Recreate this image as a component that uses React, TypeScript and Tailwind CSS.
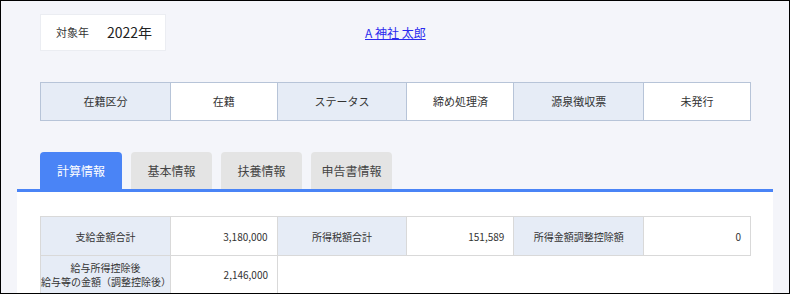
import React from "react"

const statusCells = [
  { label: "在籍区分", value: "在籍" },
  { label: "ステータス", value: "締め処理済" },
  { label: "源泉徴収票", value: "未発行" },
]

const tabs = ["計算情報", "基本情報", "扶養情報", "申告書情報"]

export default function App() {
  return (
    <div
      className="w-[790px] h-[294px] border border-black bg-[#f4f5fa] overflow-hidden text-[#333]"
      style={{ fontFamily: '"Noto Sans CJK JP", "Noto Sans", sans-serif' }}
    >
      {/* 上部 */}
      <div className="flex items-center mt-[13px] ml-[39px]">
        <div className="w-[126px] h-[37px] bg-white border border-[#ebedf2] flex items-center pl-[15px]">
          <span className="text-[11px]">対象年</span>
          <span className="text-[14px] ml-[18px] text-[#222]">2022年</span>
        </div>
        <a href="#" className="ml-[199px] text-[12px] text-[#2a2aee] underline">
          A 神社 太郎
        </a>
      </div>

      {/* ステータス */}
      <div className="mt-[31px] ml-[39px] flex border-t border-l border-[#b7c4d8] w-[711px]">
        {statusCells.map(c => (
          <React.Fragment key={c.label}>
            <div className="w-[130px] h-[38px] flex items-center justify-center bg-[#e6ecf6] border-r border-b border-[#b7c4d8] text-[11px]">
              {c.label}
            </div>
            <div className="w-[107px] h-[38px] flex items-center justify-center bg-white border-r border-b border-[#b7c4d8] text-[11px]">
              {c.value}
            </div>
          </React.Fragment>
        ))}
      </div>

      {/* タブ */}
      <div className="mt-[31px] ml-[39px] flex gap-[9px]">
        {tabs.map((t, i) => (
          <div
            key={t}
            className={
              i === 0
                ? "w-[82px] h-[37px] rounded-t-[4px] bg-[#4a84f6] text-white text-[12px] flex items-center justify-center"
                : "w-[81px] h-[37px] rounded-t-[4px] bg-[#e4e4e4] text-[#444] text-[12px] flex items-center justify-center"
            }
          >
            {t}
          </div>
        ))}
      </div>
      <div className="ml-[16px] w-[756px] h-[3px] bg-[#4a84f6]" />

      {/* 計算情報 */}
      <div className="ml-[16px] w-[756px] h-[200px] bg-white pt-[24px] pl-[23px]">
        <div className="w-[711px] border-t border-l border-[#d9d9d9] text-[10px]">
          <div className="flex">
            <div className="w-[130px] h-[39px] flex items-center justify-center bg-[#e6ecf6] border-r border-b border-[#d9d9d9]">支給金額合計</div>
            <div className="w-[107px] h-[39px] flex items-center justify-end pr-[9px] border-r border-b border-[#d9d9d9]">3,180,000</div>
            <div className="w-[130px] h-[39px] flex items-center justify-center bg-[#e6ecf6] border-r border-b border-[#d9d9d9]">所得税額合計</div>
            <div className="w-[107px] h-[39px] flex items-center justify-end pr-[9px] border-r border-b border-[#d9d9d9]">151,589</div>
            <div className="w-[130px] h-[39px] flex items-center justify-center bg-[#e6ecf6] border-r border-b border-[#d9d9d9]">所得金額調整控除額</div>
            <div className="w-[107px] h-[39px] flex items-center justify-end pr-[9px] border-r border-b border-[#d9d9d9]">0</div>
          </div>
          <div className="flex">
            <div className="w-[130px] h-[38px] flex flex-col items-center justify-center leading-[14px] bg-[#e6ecf6] border-r border-b border-[#d9d9d9]">
              <span>給与所得控除後</span>
              <span>給与等の金額（調整控除後）</span>
            </div>
            <div className="w-[107px] h-[38px] flex items-center justify-end pr-[9px] border-r border-b border-[#d9d9d9]">2,146,000</div>
          </div>
        </div>
      </div>
    </div>
  )
}
